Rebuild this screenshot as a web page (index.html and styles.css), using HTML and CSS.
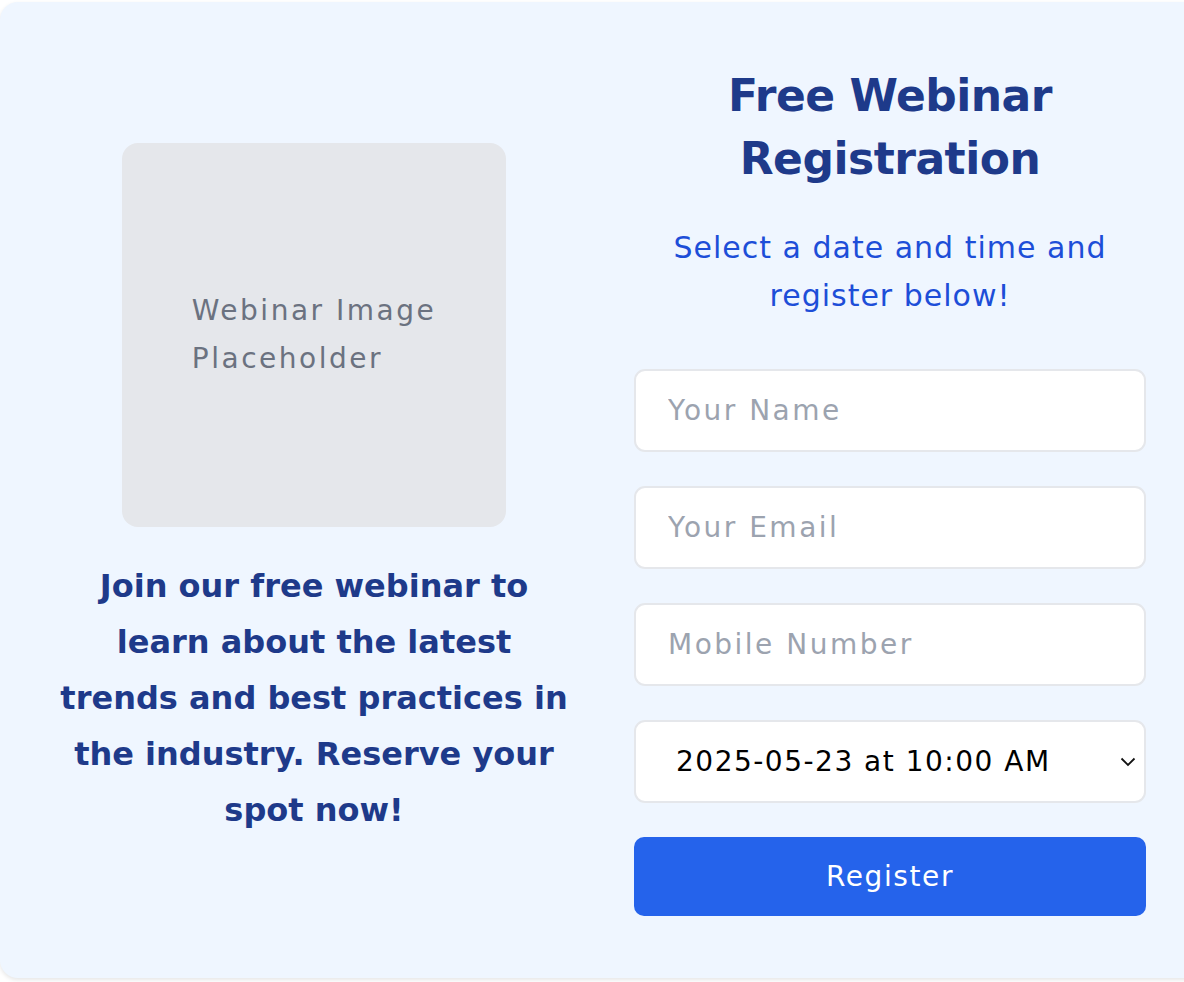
FILE: index.html
```html
<!DOCTYPE html>
<html lang="en">
<head>
<meta charset="utf-8">
<title>Free Webinar Registration</title>
<link rel="stylesheet" href="styles.css">
</head>
<body>
<div class="card">
  <div class="left">
    <div class="image-ph"><p>Webinar Image<br>Placeholder</p></div>
    <p class="intro">Join our free webinar to<br>learn about the latest<br>trends and best practices in<br>the industry. Reserve your<br>spot now!</p>
  </div>
  <div class="right">
    <h1 class="title">Free Webinar<br>Registration</h1>
    <p class="subtitle">Select a date and time and<br>register below!</p>
    <form class="form">
      <input class="field" type="text" placeholder="Your Name">
      <input class="field" type="email" placeholder="Your Email">
      <input class="field" type="tel" placeholder="Mobile Number">
      <div class="select-wrap">
        <select class="field select">
          <option>2025-05-23 at 10:00 AM</option>
        </select>
        <svg class="chev" width="16" height="10" viewBox="0 0 16 10"><path d="M1.5 1.5 L8 8 L14.5 1.5" fill="none" stroke="#111" stroke-width="1.8"/></svg>
      </div>
      <button class="btn" type="button">Register</button>
    </form>
  </div>
</div>
</body>
</html>
```
FILE: styles.css
```css
html, body {
  margin: 0;
  padding: 0;
  background: #ffffff;
  overflow: hidden;
}
body {
  font-family: "DejaVu Sans", "Open Sans", sans-serif;
  width: 1184px;
  height: 982px;
}
.card {
  margin-top: 2px;
  width: 1210px;
  height: 976px;
  box-sizing: border-box;
  padding: 64px;
  background: #eff6ff;
  border-radius: 18px;
  box-shadow: 0 2px 4px rgba(0,0,0,0.10);
  display: flex;
  align-items: center;
  gap: 70px;
}
.left {
  width: 500px;
  display: flex;
  flex-direction: column;
  align-items: center;
}
.image-ph {
  width: 384px;
  height: 384px;
  background: #e5e7eb;
  border-radius: 16px;
  display: flex;
  align-items: center;
  justify-content: center;
}
.image-ph p {
  margin: 0;
  color: #6b7280;
  font-size: 28px;
  letter-spacing: 2.5px;
  line-height: 48px;
  text-align: left;
}
.intro {
  margin: 31px 0 0;
  text-align: center;
  color: #1e3a8a;
  font-size: 32px;
  font-weight: 700;
  line-height: 56px;
  white-space: nowrap;
}
.right {
  width: 512px;
  display: flex;
  flex-direction: column;
  align-items: stretch;
}
.title {
  margin: 0;
  text-align: center;
  color: #1e3a8a;
  font-size: 44px;
  letter-spacing: -0.5px;
  font-weight: 700;
  line-height: 63px;
}
.subtitle {
  margin: 34px 0 0;
  text-align: center;
  color: #1d4ed8;
  font-size: 30px;
  letter-spacing: 1px;
  line-height: 48px;
}
.form {
  margin-top: 49px;
  display: flex;
  flex-direction: column;
  gap: 34px;
}
.field {
  box-sizing: border-box;
  width: 100%;
  height: 83px;
  margin: 0;
  padding: 0 32px;
  border: 2px solid #e5e7eb;
  border-radius: 11px;
  background: #ffffff;
  font-family: inherit;
  font-size: 28px;
  letter-spacing: 2.5px;
  color: #111827;
  outline: none;
}
.field::placeholder {
  color: #9ca3af;
}
.select-wrap {
  position: relative;
}
.select {
  appearance: none;
  -webkit-appearance: none;
  color: #000000;
  letter-spacing: 1.5px;
  padding-left: 40px;
}
.chev {
  position: absolute;
  right: 10px;
  top: 37px;
  pointer-events: none;
}
.btn {
  height: 79px;
  border: none;
  border-radius: 10px;
  background: #2563eb;
  color: #ffffff;
  font-family: inherit;
  font-size: 28px;
  letter-spacing: 1.6px;
  cursor: pointer;
}
```
